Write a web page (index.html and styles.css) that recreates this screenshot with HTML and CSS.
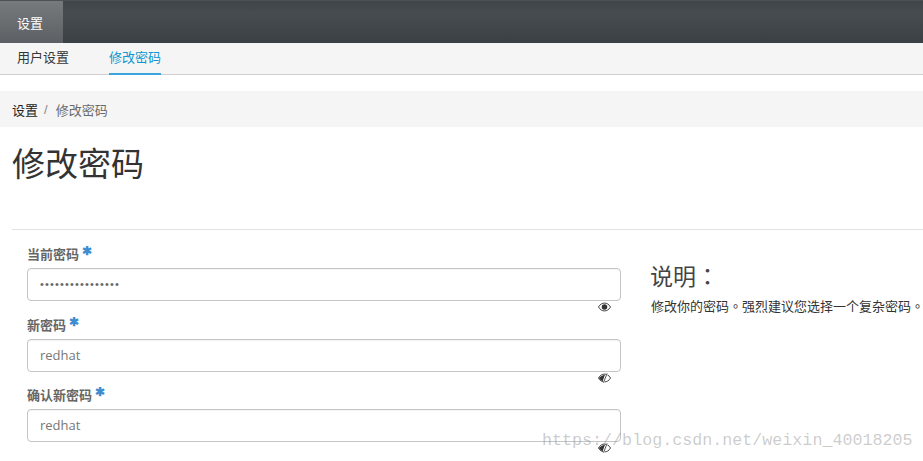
FILE: index.html
```html
<!DOCTYPE html>
<html lang="zh">
<head>
<meta charset="utf-8">
<title>修改密码</title>
<link rel="stylesheet" href="styles.css">
</head>
<body>
<header class="topbar"><a class="topbar-tab">设置</a></header>
<nav class="subnav">
  <a class="subnav-item">用户设置</a>
  <a class="subnav-item active">修改密码</a>
</nav>
<div class="breadcrumb"><span>设置</span><span class="sep">/</span><span class="current">修改密码</span></div>
<h1 class="title">修改密码</h1>
<main class="content">
  <form class="form">
    <div class="field">
      <label class="label">当前密码<span class="req">✱</span></label>
      <div class="input dots">••••••••••••••••</div>
      <div class="eye-row">
        <svg class="eye" viewBox="0 0 14 10"><path d="M.5 5C2.300 2 4.500.8 7 .8S11.700 2 13.500 5C11.700 8 9.500 9.200 7 9.200S2.300 8 .5 5Z" fill="#fff" stroke="#333" stroke-width="1"/><circle cx="7" cy="5" r="3" fill="#333"/></svg>
      </div>
    </div>
    <div class="field">
      <label class="label">新密码<span class="req">✱</span></label>
      <div class="input">redhat</div>
      <div class="eye-row">
        <svg class="eye" viewBox="0 0 14 10"><path d="M.5 5C2.300 2 4.500.8 7 .8S11.700 2 13.500 5C11.700 8 9.500 9.200 7 9.200S2.300 8 .5 5Z" fill="#fff" stroke="#333" stroke-width="1"/><path d="M1 5C2.500 3.300 4.500 2 7.500 1.500L5 8.500C3.500 8 2 6.600 1 5Z" fill="#333"/><path d="M10 0 6.200 10" stroke="#fff" stroke-width="1.600"/><path d="M9.800 0 6 10" stroke="#333" stroke-width=".9"/></svg>
      </div>
    </div>
    <div class="field">
      <label class="label">确认新密码<span class="req">✱</span></label>
      <div class="input">redhat</div>
      <div class="eye-row">
        <svg class="eye" viewBox="0 0 14 10"><path d="M.5 5C2.300 2 4.500.8 7 .8S11.700 2 13.500 5C11.700 8 9.500 9.200 7 9.200S2.300 8 .5 5Z" fill="#fff" stroke="#333" stroke-width="1"/><path d="M1 5C2.500 3.300 4.500 2 7.500 1.500L5 8.500C3.500 8 2 6.600 1 5Z" fill="#333"/><path d="M10 0 6.200 10" stroke="#fff" stroke-width="1.600"/><path d="M9.800 0 6 10" stroke="#333" stroke-width=".9"/></svg>
      </div>
    </div>
  </form>
  <aside class="help" lang="zh-Hant">
    <h2 class="help-title">说明：</h2>
    <p class="help-text">修改你的密码。强烈建议您选择一个复杂密码。</p>
  </aside>
</main>
<div class="watermark">https://blog.csdn.net/weixin_40018205</div>
</body>
</html>
```
FILE: styles.css
```css
html, body { margin: 0; padding: 0; height: 461px; overflow: hidden; background: #fff; }
body { font-family: "Liberation Sans", "Noto Sans CJK SC", sans-serif; color: #333; position: relative; }
.topbar { height: 43px; display: flex; background: linear-gradient(#3f4549, #474c50 30%, #3b4044); border-top: 1px solid #4d5155; box-sizing: border-box; }
.topbar-tab { width: 63px; box-sizing: border-box; padding-left: 17px; display: flex; align-items: center; color: #fff; font-size: 13px; background: linear-gradient(#777a7d, #5c6064); }
.subnav { height: 32px; box-sizing: border-box; display: flex; gap: 40px; padding-left: 17px; background: #f5f5f5; border-bottom: 1px solid #cfcfcf; }
.subnav-item { font-size: 13px; line-height: 30px; height: 32px; box-sizing: border-box; color: #363636; }
.subnav-item.active { color: #0d96cf; border-bottom: 2px solid #39a5dc; }
.breadcrumb { margin-top: 16px; height: 36px; background: #f5f5f5; padding-left: 12px; display: flex; align-items: center; font-size: 13px; color: #222; }
.sep { color: #8a8a8a; margin: 0 8px 0 6px; }
.current { color: #6a6a6a; }
.title { margin: 0; padding: 16px 0 0 12px; height: 102px; box-sizing: border-box; font-size: 33px; font-weight: 400; line-height: 44px; color: #333; }
.content { margin-left: 12px; padding: 12px 0 0 15px; border-top: 1px solid #e3e3e3; display: flex; }
.form { width: 594px; flex: none; }
.field { height: 70.500px; }
.label { display: block; height: 26px; font-size: 13px; line-height: 26px; font-weight: 700; color: #666; }
.req { color: #3f8dd1; margin-left: 3px; font-size: 12px; position: relative; top: -4px; }
.input { height: 33px; box-sizing: border-box; border: 1px solid #c5c5c5; border-radius: 4px; padding-left: 12px; font-family: "Open Sans", sans-serif; font-size: 13px; line-height: 31px; color: #777; box-shadow: inset 0 1px 1px rgba(0,0,0,.05); }
.input.dots { font-family: "Liberation Sans", sans-serif; font-size: 11px; letter-spacing: 1.150px; color: #6a6a6a; }
.eye-row { display: flex; justify-content: flex-end; padding: 1px 10px 0 0; }
.eye { width: 13px; height: 10px; display: block; }
.help { margin-left: 30px; padding-top: 20px; white-space: nowrap; font-family: "Liberation Sans", "Noto Sans CJK TC", sans-serif; }
.help-title { margin: 0 0 0 -1px; font-size: 23px; font-weight: 400; line-height: 30px; color: #444; }
.help-text { margin: 6px 0 0; font-size: 13px; line-height: 18px; color: #333; }
.watermark { position: absolute; left: 542px; top: 430px; font-family: "Liberation Mono", monospace; font-size: 16.700px; line-height: 22px; color: rgba(120,120,120,.38); white-space: nowrap; }
```
